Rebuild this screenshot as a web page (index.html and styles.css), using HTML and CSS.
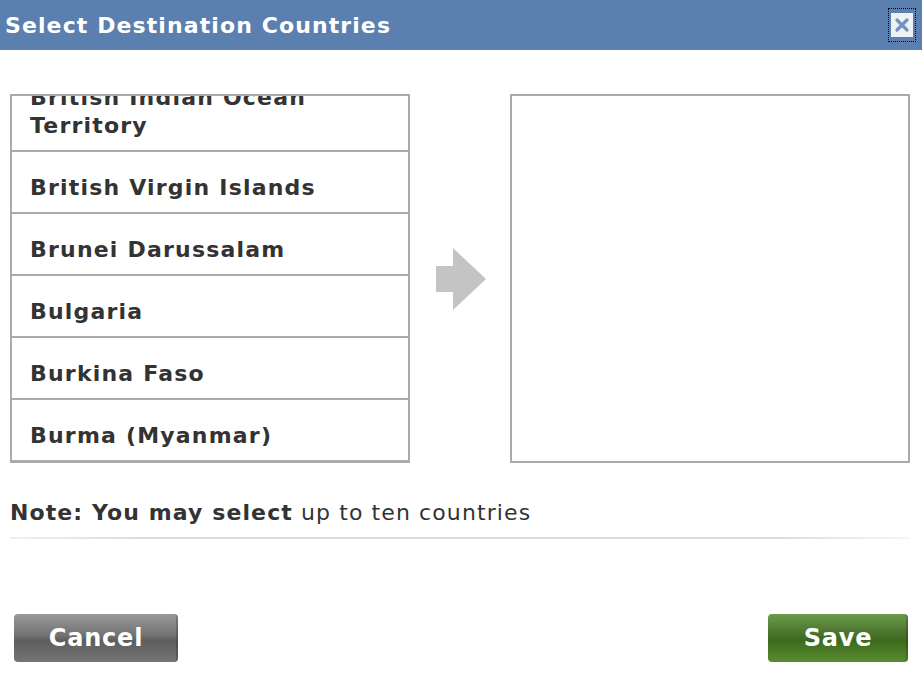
FILE: index.html
```html
<!DOCTYPE html>
<html lang="en">
<head>
  <meta charset="UTF-8">
  <title>Select Destination Countries</title>
  <link rel="stylesheet" href="styles.css">
</head>
<body>

  <div class="titlebar">
    <h2>Select Destination Countries</h2>
    <button class="close" title="Close">
      <svg width="22" height="24" viewBox="0 0 22 24">
        <rect x="0" y="0" width="22" height="24" fill="#eef2f7"/>
        <path d="M6 7 L16 17 M16 7 L6 17" stroke="#7592bb" stroke-width="3.2" stroke-linecap="round"/>
      </svg>
    </button>
  </div>

  <div class="picker">
    <div class="listbox">
      <ul class="countries">
        <li>British Indian Ocean Territory</li>
        <li>British Virgin Islands</li>
        <li>Brunei Darussalam</li>
        <li>Bulgaria</li>
        <li>Burkina Faso</li>
        <li>Burma (Myanmar)</li>
      </ul>
    </div>

    <div class="arrow">
      <svg width="50" height="62" viewBox="0 0 50 62">
        <polygon points="0,18 17,18 17,0 50,31 17,62 17,44 0,44" fill="#c4c4c4"/>
      </svg>
    </div>

    <div class="listbox selected"></div>
  </div>

  <p class="note"><b>Note: You may select</b> up to ten countries</p>
  <div class="rule"></div>

  <div class="actions">
    <button class="btn cancel">Cancel</button>
    <button class="btn save">Save</button>
  </div>

</body>
</html>
```

FILE: styles.css
```css
body { margin: 0; font-family: "DejaVu Sans", Verdana, sans-serif; color: #333; background: #fff; width: 922px; }
.titlebar { height: 50px; background-color: #5b7fae; display: flex; align-items: center; justify-content: space-between; padding: 0 6px 0 5px; }
.titlebar h2 { margin: 0; color: #fff; font-size: 22px; font-weight: bold; letter-spacing: 1.1px; }
.close { width: 28px; height: 34px; padding: 0; background: none; border: 1px dotted #000; display: flex; align-items: center; justify-content: center; }
.close svg { display: block; }
.picker { display: flex; align-items: center; margin: 44px 0 0 10px; }
.listbox { width: 396px; height: 366px; border: 2px solid #aaa; border-bottom-width: 1px; overflow: hidden; background: #fff; }
.selected { border-bottom-width: 2px; height: 365px; }
.countries { list-style: none; margin: -34px 0 0 0; padding: 0; }
.countries li { font-size: 22px; font-weight: bold; line-height: 28px; letter-spacing: 1.2px; padding: 22px 40px 10px 18px; border-bottom: 2px solid #aaa; }
.arrow { width: 98px; display: flex; justify-content: center; padding-left: 2px; }
.arrow svg { display: block; }
.note { margin: 36px 0 0 10px; font-size: 22px; line-height: 28px; letter-spacing: 1.1px; }
.rule { height: 2px; margin: 10px 12px 0 10px; background: linear-gradient(to right, #f0f0f0, #dcdcdc 15%, #dcdcdc 85%, #f6f6f6); }
.actions { display: flex; justify-content: space-between; margin: 75px 14px 0 14px; }
.btn { height: 48px; border: none; border-radius: 4px; color: #fff; font-family: "DejaVu Sans", Verdana, sans-serif; font-size: 24px; font-weight: bold; letter-spacing: 0.8px; box-shadow: inset -5px 0 0 -3px rgba(0,0,0,0.18); }
.cancel { width: 164px; background: linear-gradient(#9a9a9a, #717171 45%, #5e5e5e 55%, #747474); }
.save { width: 140px; background: linear-gradient(#6d9a4d, #466f27 45%, #3c6a1c 55%, #5b8b32); }
```
